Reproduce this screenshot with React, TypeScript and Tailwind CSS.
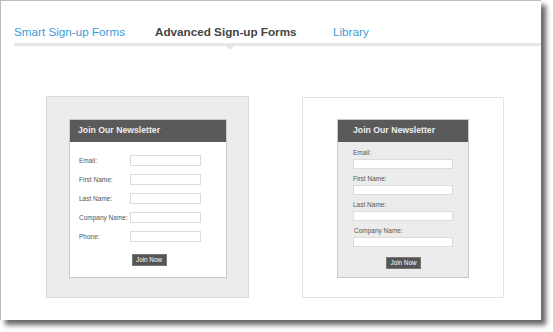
import React from "react";

const font = { fontFamily: '"Liberation Sans", Arial, sans-serif' };

function LeftForm() {
  const rows = ["Email:", "First Name:", "Last Name:", "Company Name:", "Phone:"];
  return (
    <div className="w-[158px] h-[159px] bg-white border border-[#c9c9c9] flex flex-col">
      <div className="h-[22px] bg-[#5a5a5a] flex items-center pl-[8px] text-[8.7px] font-bold text-[#eeeeee] shrink-0">
        Join Our Newsletter
      </div>
      <div className="flex flex-col gap-[8px] pt-[13px] pl-[9px]">
        {rows.map((r) => (
          <div key={r} className="flex items-center h-[11px]">
            <div className="w-[51px] text-[6.5px] text-[#555] leading-[8px] whitespace-nowrap">{r}</div>
            <div className="w-[71px] h-[11px] border border-[#dcdcdc] bg-white" />
          </div>
        ))}
      </div>
      <div className="flex justify-center mt-[12px] pl-[2px]">
        <div className="w-[35px] h-[12px] bg-[#555555] border border-[#777] flex items-center justify-center text-[6.3px] text-white leading-none">
          Join Now
        </div>
      </div>
    </div>
  );
}

function RightForm() {
  const rows = ["Email:", "First Name:", "Last Name:", "Company Name:"];
  return (
    <div className="w-[132px] h-[159px] bg-[#ececec] border border-[#c9c9c9] flex flex-col">
      <div className="h-[22px] bg-[#5a5a5a] flex items-center pl-[15px] text-[8.7px] font-bold text-[#eeeeee] shrink-0">
        Join Our Newsletter
      </div>
      <div className="flex flex-col gap-[6px] pt-[7px] pl-[15px]">
        {rows.map((r) => (
          <div key={r} className="flex flex-col">
            <div className={"h-[8px] text-[6.5px] text-[#555] leading-[8px] whitespace-nowrap mb-[2px] " + (r === "Company Name:" ? "pl-[1px]" : "")}>{r}</div>
            <div className="w-[100px] h-[10px] border border-[#dcdcdc] bg-white" />
          </div>
        ))}
      </div>
      <div className="flex justify-center mt-[10px] pl-[1px]">
        <div className="w-[35px] h-[12px] bg-[#555555] border border-[#777] flex items-center justify-center text-[6.3px] text-white leading-none">
          Join Now
        </div>
      </div>
    </div>
  );
}

export default function App() {
  return (
    <div className="w-[553px] h-[332px] bg-white overflow-hidden" style={font}>
      <div className="w-[541px] h-[320px] bg-white border-t border-l border-[#bdbdbd] shadow-[5px_5px_5px_rgba(0,0,0,0.6)] flex flex-col">
        <div className="relative ml-[13px] pt-[23px] flex items-end h-[45px] border-b-[3px] border-[#e6e6e6]">
          <div className="w-[141px] text-[11.7px] leading-[16px] text-[#3d9ad6] pb-[3px]">Smart Sign-up Forms</div>
          <div className="w-[178px] text-[11.7px] leading-[16px] font-bold text-[#444] pb-[3px]">Advanced Sign-up Forms</div>
          <div className="text-[11.7px] leading-[16px] text-[#3d9ad6] pb-[3px]">Library</div>
          <div className="absolute left-[211px] top-[44px] w-0 h-0 border-l-[5px] border-r-[5px] border-t-[5px] border-l-transparent border-r-transparent border-t-[#e6e6e6]" />
        </div>
        <div className="flex mt-[50px] ml-[45px] gap-[53px]">
          <div className="w-[203px] h-[202px] bg-[#ececec] border border-[#d9d9d9] pt-[22px] pl-[22px]">
            <LeftForm />
          </div>
          <div className="w-[202px] h-[201px] bg-white border border-[#e3e3e3] pt-[21px] pl-[34px] mt-[1px]">
            <RightForm />
          </div>
        </div>
      </div>
    </div>
  );
}
